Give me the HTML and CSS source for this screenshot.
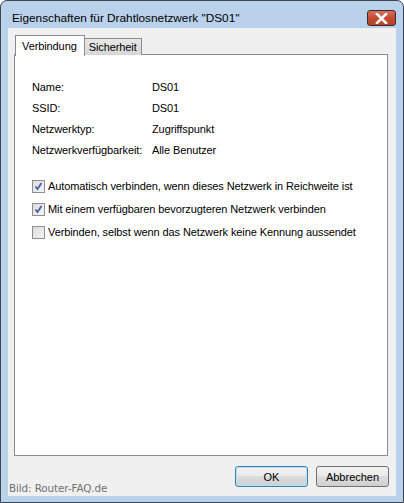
FILE: index.html
```html
<!DOCTYPE html>
<html lang="de">
<head>
<meta charset="utf-8">
<title>Eigenschaften für Drahtlosnetzwerk "DS01"</title>
<link rel="stylesheet" href="styles.css">
</head>
<body>
<div class="window">
  <div class="titlebar">
    <span class="title">Eigenschaften für Drahtlosnetzwerk "DS01"</span>
    <button class="close" aria-label="Schließen">
      <svg width="13" height="11" viewBox="0 0 13 11">
        <path d="M2 1 L11 10 M11 1 L2 10" stroke="#fff" stroke-width="2.6" stroke-linecap="square"/>
      </svg>
    </button>
  </div>
  <div class="client">
    <div class="tabs">
      <div class="tab active">Verbindung</div>
      <div class="tab">Sicherheit</div>
    </div>
    <div class="panel">
      <div class="props">
        <div class="label">Name:</div><div class="value">DS01</div>
        <div class="label">SSID:</div><div class="value">DS01</div>
        <div class="label">Netzwerktyp:</div><div class="value">Zugriffspunkt</div>
        <div class="label">Netzwerkverfügbarkeit:</div><div class="value">Alle Benutzer</div>
      </div>
      <div class="checks">
        <label class="check"><span class="box checked"><svg width="9" height="9" viewBox="0 0 9 9"><path d="M1.5 4.5 L3.5 7 L7.5 1" fill="none" stroke="#4a5fa8" stroke-width="1.8"/></svg></span>Automatisch verbinden, wenn dieses Netzwerk in Reichweite ist</label>
        <label class="check"><span class="box checked"><svg width="9" height="9" viewBox="0 0 9 9"><path d="M1.5 4.5 L3.5 7 L7.5 1" fill="none" stroke="#4a5fa8" stroke-width="1.8"/></svg></span>Mit einem verfügbaren bevorzugteren Netzwerk verbinden</label>
        <label class="check"><span class="box"></span>Verbinden, selbst wenn das Netzwerk keine Kennung aussendet</label>
      </div>
    </div>
    <div class="buttons">
      <button class="btn default">OK</button>
      <button class="btn">Abbrechen</button>
    </div>
    <div class="credit">Bild: Router-FAQ.de</div>
  </div>
</div>
</body>
</html>
```
FILE: styles.css
```css
html, body {
  margin: 0;
  padding: 0;
  background: #ffffff;
}
.window {
  position: relative;
  width: 404px;
  height: 503px;
  box-sizing: border-box;
  border: 1px solid #3c4650;
  border-radius: 7px 7px 0 0;
  background: #b9d1ea;
  padding: 0 7px 6px 7px;
  display: flex;
  flex-direction: column;
}
.titlebar {
  height: 27px;
  display: flex;
  align-items: flex-start;
  justify-content: space-between;
}
.title {
  font-family: "Liberation Sans", Arial, sans-serif;
  font-size: 11.8px;
  color: #000;
  margin: 10px 0 0 4px;
  line-height: 15px;
}
.close {
  margin-top: 9px;
  width: 29px;
  height: 16px;
  padding: 0;
  border: 1px solid #3b2a28;
  border-radius: 3px;
  background: linear-gradient(#d5735f, #c4492f 50%, #b9412a);
  display: flex;
  align-items: center;
  justify-content: center;
}
.client {
  position: relative;
  flex: 1;
  background: #f0f0f0;
  padding: 7px 8px 0 6px;
  display: flex;
  flex-direction: column;
  font-family: "Liberation Sans", Arial, sans-serif;
  font-size: 11px;
  letter-spacing: -0.1px;
  color: #000;
}
.tabs {
  display: flex;
  align-items: flex-end;
  height: 20px;
  position: relative;
  z-index: 1;
  margin-bottom: -1px;
}
.tab {
  box-sizing: border-box;
  height: 17px;
  padding: 0 4px;
  border: 1px solid #898c95;
  border-bottom: none;
  background: linear-gradient(#e8e8e8, #d6d6d6);
  line-height: 16px;
  margin-left: -1px;
}
.tab.active {
  height: 21px;
  margin-left: 1px;
  margin-bottom: -1px;
  background: #fff;
  padding: 0 7px 0 6px;
  line-height: 20px;
  z-index: 2;
  position: relative;
}
.panel {
  box-sizing: border-box;
  height: 402px;
  background: #fff;
  border: 1px solid #898c95;
  padding: 26px 0 0 17px;
}
.props {
  display: grid;
  grid-template-columns: 120px auto;
  row-gap: 8px;
  line-height: 13px;
}
.checks {
  margin-top: 23px;
  display: flex;
  flex-direction: column;
  gap: 10px;
}
.check {
  display: flex;
  align-items: center;
  gap: 3px;
  line-height: 13px;
}
.box {
  box-sizing: border-box;
  width: 13px;
  height: 13px;
  border: 1px solid #8f8f8f;
  background: linear-gradient(135deg, #dcdcdc, #f4f4f4);
  display: flex;
  align-items: center;
  justify-content: center;
}
.buttons {
  display: flex;
  justify-content: flex-end;
  gap: 8px;
  margin-top: 10px;
  margin-right: -1px;
}
.btn {
  box-sizing: border-box;
  width: 73px;
  height: 21px;
  padding: 0;
  border: 1px solid #707070;
  border-radius: 3px;
  background: linear-gradient(#f2f2f2, #ebebeb 45%, #dddddd 50%, #cfcfcf);
  font-family: "Liberation Sans", Arial, sans-serif;
  font-size: 11px;
  color: #000;
}
.btn.default {
  border-color: #3c7fb1;
  box-shadow: inset 0 0 0 1px #b4e3f8;
}
.credit {
  position: absolute;
  left: 1px;
  bottom: 2px;
  font-family: "DejaVu Sans", sans-serif;
  font-size: 10.4px;
  color: #707070;
}
```
